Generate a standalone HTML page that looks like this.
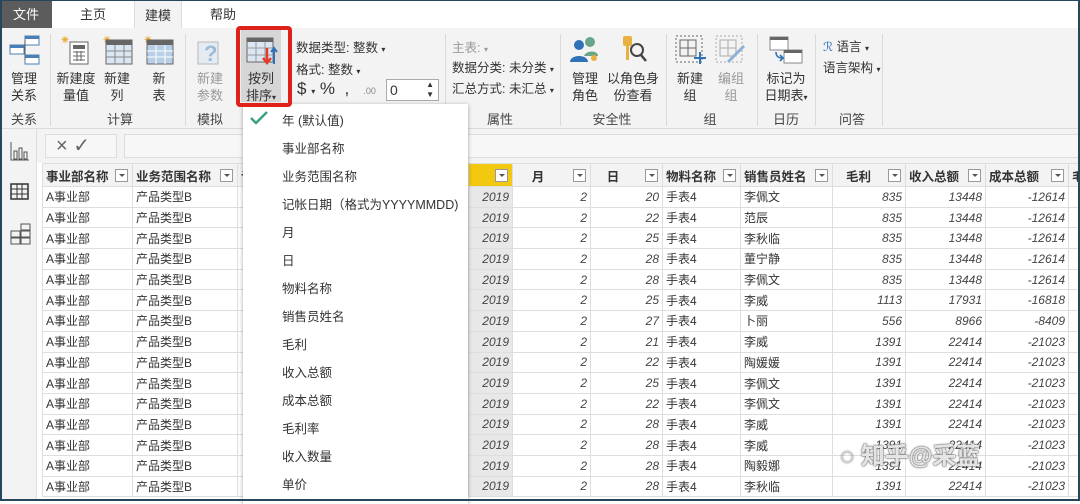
<!DOCTYPE html>
<html><head><meta charset="utf-8"><style>
*{margin:0;padding:0;box-sizing:border-box}
body{width:1080px;height:501px;overflow:hidden;background:#fff;font-family:"Liberation Sans","Noto Sans CJK SC",sans-serif;color:#333;position:relative;font-size:12px}
.a{position:absolute}
#frame{position:absolute;inset:0;border:2px solid #27475a;border-top-width:1px;pointer-events:none;z-index:50}
.tab{position:absolute;top:0;height:28px;line-height:30px;font-size:13px;text-align:center}
#ribbon{position:absolute;top:28px;left:0;width:1080px;height:101px;background:#f3f3f3;border-bottom:1px solid #dcdcdc}
.btn{position:absolute;text-align:center;font-size:13px;line-height:17px;color:#333}
.gl{position:absolute;top:109px;font-size:13px;color:#444;text-align:center}
.sep{position:absolute;top:34px;width:1px;height:92px;background:#dadada}
.sm{position:absolute;font-size:12.5px;color:#333}
.dis{color:#999}
table{position:absolute;left:42px;top:163px;border-collapse:collapse;table-layout:fixed;width:1040px}
td,th{border:1px solid #dedede;height:20.7px;padding:0 3px;white-space:nowrap;overflow:hidden;font-size:12px}
th{height:23px;background:#f3f3f3;font-weight:bold;text-align:left;color:#333;position:relative;font-size:12.5px}
th i{position:absolute;right:4px;top:5px;width:13px;height:13px;border:1px solid #999;background:#fff}
th i:after{content:"";position:absolute;left:3px;top:4px;border:3px solid transparent;border-top:3px solid #555}
td.n{text-align:right;font-style:italic;color:#444}
td.y{background:#e8e8e8;text-align:right;font-style:italic;color:#444}
#dd{position:absolute;left:243px;top:104px;width:225px;height:400px;background:#fff;box-shadow:0 1px 4px rgba(0,0,0,.35);z-index:10}
#dd div{position:absolute;left:39px;font-size:12.5px;color:#333}
</style></head><body>
<div class="tab" style="left:0;width:52px;background:#5c5c5c;color:#fff;font-size:13px">文件</div>
<div class="tab" style="left:68px;width:50px;font-size:13px">主页</div>
<div class="tab" style="left:134px;width:48px;background:#f3f3f3;border:1px solid #dcdcdc;border-bottom:none;height:29px;font-size:13px">建模</div>
<div class="tab" style="left:198px;width:50px;font-size:13px">帮助</div>
<div id="ribbon"></div>
<svg class="a" style="left:9px;top:34px" width="32" height="32"><rect x="16" y="2" width="14" height="9" fill="#fff" stroke="#4a7fb5"/><rect x="1" y="11" width="14" height="9" fill="#fff" stroke="#4a7fb5"/><rect x="16" y="21" width="14" height="9" fill="#fff" stroke="#4a7fb5"/><path d="M15 15H16M16 6V26" stroke="#555" fill="none"/><rect x="16" y="2" width="14" height="3" fill="#4a7fb5"/><rect x="16" y="21" width="14" height="3" fill="#4a7fb5"/><rect x="1" y="11" width="14" height="3" fill="#4a7fb5"/></svg>
<div class="btn" style="left:6px;top:70px;width:36px">管理<br>关系</div>
<div class="sep" style="left:50px"></div>
<svg class="a" style="left:60px;top:34px" width="32" height="32"><text x="0" y="10" font-size="12" fill="#e8b040">✷</text><rect x="10" y="8" width="18" height="22" fill="#fff" stroke="#666"/><rect x="13" y="11" width="12" height="4" fill="#666"/><path d="M13 18h12M13 22h12M13 26h12M17 17v10M21 17v10" stroke="#666"/></svg>
<div class="btn" style="left:54px;top:70px;width:44px">新建度<br>量值</div>
<svg class="a" style="left:102px;top:34px" width="32" height="32"><text x="0" y="10" font-size="12" fill="#e8b040">✷</text><rect x="4" y="6" width="26" height="24" fill="#dbe6f3" stroke="#666"/><rect x="4" y="6" width="26" height="5" fill="#666"/><path d="M4 17h26M4 23h26M13 11v19M22 11v19" stroke="#888"/></svg>
<div class="btn" style="left:100px;top:70px;width:34px">新建<br>列</div>
<svg class="a" style="left:143px;top:34px" width="32" height="32"><text x="0" y="10" font-size="12" fill="#e8b040">✷</text><rect x="4" y="6" width="26" height="24" fill="#b9cfe8" stroke="#666"/><rect x="4" y="6" width="26" height="5" fill="#666"/><path d="M4 17h26M4 23h26M13 11v19M22 11v19" stroke="#fff"/></svg>
<div class="btn" style="left:145px;top:70px;width:28px">新<br>表</div>
<div class="gl" style="left:80px;width:80px">计算</div>
<div class="gl" style="left:6px;width:36px">关系</div>
<div class="sep" style="left:185px"></div>
<svg class="a" style="left:192px;top:34px" width="34" height="32" opacity=".55"><rect x="6" y="8" width="20" height="22" fill="#dbe6f3" stroke="#888"/><text x="12" y="27" font-size="22" font-weight="bold" fill="#5a8fc5">?</text></svg>
<div class="btn dis" style="left:193px;top:70px;width:34px">新建<br>参数</div>
<div class="gl" style="left:193px;width:34px">模拟</div>
<div class="a" style="left:241px;top:30px;width:40px;height:72px;background:#d6d6d6"></div>
<svg class="a" style="left:245px;top:36px" width="34" height="32"><rect x="2" y="2" width="26" height="24" fill="#dbe6f3" stroke="#666"/><rect x="2" y="2" width="26" height="4" fill="#666"/><path d="M2 12h26M2 19h26M11 6v20M20 6v20" stroke="#999"/><path d="M22 12v14M18 22l4 5 4-5" stroke="#e53a2a" stroke-width="2.5" fill="none"/><path d="M29 28V12M26 16l3-4 3 4" stroke="#2f72b8" stroke-width="2" fill="none"/></svg>
<div class="btn" style="left:241px;top:70px;width:40px">按列<br>排序<span style="font-size:8px">▾</span></div>
<div class="a" style="left:236px;top:26px;width:56px;height:81px;border:4px solid #e0211a;border-radius:4px;z-index:20"></div>
<div class="sm" style="left:296px;top:37px">数据类型: 整数 <span style="font-size:8px">▾</span></div>
<div class="sm" style="left:296px;top:59px">格式: 整数 <span style="font-size:8px">▾</span></div>
<div class="sm" style="left:297px;top:79px;font-size:17px">$ <span style="font-size:8px">▾</span> %&nbsp; ,&nbsp;&nbsp; <span style="font-size:9px;color:#888">.00</span></div>
<div class="a" style="left:386px;top:79px;width:53px;height:22px;border:1px solid #aaa;background:#fff;font-size:14px;padding-left:3px;line-height:20px">0<span style="position:absolute;right:4px;top:0;font-size:8px;line-height:10px">▲<br>▼</span></div>
<div class="sep" style="left:445px"></div>
<div class="sm dis" style="left:452px;top:37px">主表: <span style="font-size:8px">▾</span></div>
<div class="sm" style="left:452px;top:57px">数据分类: 未分类 <span style="font-size:8px">▾</span></div>
<div class="sm" style="left:452px;top:78px">汇总方式: 未汇总 <span style="font-size:8px">▾</span></div>
<div class="gl" style="left:470px;width:60px">属性</div>
<div class="sep" style="left:560px"></div>
<svg class="a" style="left:568px;top:34px" width="34" height="32"><circle cx="22" cy="8" r="5" fill="#6aa587"/><circle cx="11" cy="11" r="5" fill="#2f72b8"/><path d="M2 28c0-8 18-8 18 0z" fill="#2f72b8"/><path d="M16 22c2-6 14-6 14 0z" fill="#6aa587"/><circle cx="26" cy="24" r="3" fill="#e8b040"/></svg>
<div class="btn" style="left:568px;top:70px;width:34px">管理<br>角色</div>
<svg class="a" style="left:617px;top:34px" width="34" height="32"><rect x="6" y="2" width="9" height="10" rx="2" fill="#e8b040"/><rect x="9" y="12" width="3" height="14" fill="#e8b040"/><circle cx="20" cy="16" r="6" fill="none" stroke="#444" stroke-width="2"/><path d="M24 21l5 6" stroke="#444" stroke-width="2.5"/></svg>
<div class="btn" style="left:604px;top:70px;width:58px">以角色身<br>份查看</div>
<div class="gl" style="left:585px;width:54px">安全性</div>
<div class="sep" style="left:666px"></div>
<svg class="a" style="left:674px;top:34px" width="34" height="32"><rect x="2" y="2" width="26" height="26" fill="none" stroke="#666" stroke-dasharray="2 2"/><path d="M6 6h16v16H6zM14 6v16M6 14h16" stroke="#666" fill="none"/><path d="M26 18v12M20 24h12" stroke="#2f72b8" stroke-width="2"/></svg>
<div class="btn" style="left:673px;top:70px;width:34px">新建<br>组</div>
<svg class="a" style="left:714px;top:34px" width="34" height="32" opacity=".5"><rect x="2" y="2" width="26" height="26" fill="none" stroke="#666" stroke-dasharray="2 2"/><path d="M6 6h16v16H6zM14 6v16M6 14h16" stroke="#666" fill="none"/><path d="M14 28l16-16" stroke="#2f72b8" stroke-width="3"/></svg>
<div class="btn dis" style="left:714px;top:70px;width:34px">编组<br>组</div>
<div class="gl" style="left:690px;width:40px">组</div>
<div class="sep" style="left:757px"></div>
<svg class="a" style="left:768px;top:34px" width="36" height="32"><rect x="2" y="3" width="18" height="13" fill="#fff" stroke="#888"/><rect x="2" y="3" width="18" height="3" fill="#666"/><rect x="16" y="16" width="18" height="13" fill="#fff" stroke="#888"/><rect x="16" y="16" width="18" height="3" fill="#666"/><path d="M8 18c0 5 3 6 7 6M12 21l3 3-3 3" stroke="#2f72b8" stroke-width="1.6" fill="none"/></svg>
<div class="btn" style="left:760px;top:70px;width:52px">标记为<br>日期表<span style="font-size:8px">▾</span></div>
<div class="gl" style="left:766px;width:40px">日历</div>
<div class="sep" style="left:815px"></div>
<div class="sm" style="left:823px;top:36px"><span style="color:#2f72b8">ℛ</span> 语言 <span style="font-size:8px">▾</span></div>
<div class="sm" style="left:823px;top:57px">语言架构 <span style="font-size:8px">▾</span></div>
<div class="gl" style="left:832px;width:40px">问答</div>
<div class="sep" style="left:882px"></div>
<div class="a" style="left:0;top:129px;width:37px;height:372px;background:#f3f3f3;border-right:1px solid #ddd"></div>
<svg class="a" style="left:9px;top:140px" width="22" height="22"><path d="M2 2v18h18" stroke="#555" fill="none"/><rect x="5" y="11" width="3" height="8" fill="none" stroke="#555"/><rect x="10" y="8" width="3" height="11" fill="none" stroke="#555"/><rect x="15" y="12" width="3" height="7" fill="none" stroke="#555"/></svg>
<svg class="a" style="left:10px;top:183px" width="20" height="18"><rect x="1" y="1" width="17" height="15" fill="none" stroke="#333" stroke-width="1.5"/><path d="M1 6h17M1 11h17M7 1v15M12 1v15" stroke="#333"/></svg>
<svg class="a" style="left:10px;top:223px" width="22" height="22"><rect x="11" y="1" width="9" height="6" fill="none" stroke="#555"/><rect x="1" y="8" width="9" height="6" fill="none" stroke="#555"/><rect x="11" y="8" width="9" height="6" fill="none" stroke="#555"/><rect x="11" y="15" width="9" height="6" fill="none" stroke="#555"/><rect x="1" y="15" width="9" height="6" fill="none" stroke="#555"/></svg>
<div class="a" style="left:37px;top:129px;width:1043px;height:34px;background:#f3f3f3"></div>
<div class="a" style="left:45px;top:134px;width:72px;height:24px;border:1px solid #ddd;background:#f7f7f7;font-size:20px;color:#666;line-height:22px;padding-left:10px;font-family:'Liberation Sans',sans-serif">×&nbsp;✓</div>
<div class="a" style="left:124px;top:134px;width:956px;height:24px;border:1px solid #ddd;background:#f7f7f7"></div>
<table>
<colgroup><col style="width:90px"><col style="width:105px"><col style="width:231px"><col style="width:44px"><col style="width:78px"><col style="width:72px"><col style="width:78px"><col style="width:92px"><col style="width:73px"><col style="width:80px"><col style="width:83px"><col style="width:14px"></colgroup>
<tr><th>事业部名称<i></i></th><th>业务范围名称<i></i></th><th>记帐日期<i></i></th><th style="background:#f2c811"><i></i></th><th style="text-align:center;padding-right:30px">月<i></i></th><th style="text-align:center;padding-right:30px">日<i></i></th><th>物料名称<i></i></th><th>销售员姓名<i></i></th><th style="text-align:center;padding-right:24px">毛利<i></i></th><th>收入总额<i></i></th><th>成本总额<i></i></th><th>毛</th></tr>
<tr><td>A事业部</td><td>产品类型B</td><td></td><td class="y">2019</td><td class="n">2</td><td class="n">20</td><td>手表4</td><td>李佩文</td><td class="n">835</td><td class="n">13448</td><td class="n">-12614</td><td></td></tr>
<tr><td>A事业部</td><td>产品类型B</td><td></td><td class="y">2019</td><td class="n">2</td><td class="n">22</td><td>手表4</td><td>范辰</td><td class="n">835</td><td class="n">13448</td><td class="n">-12614</td><td></td></tr>
<tr><td>A事业部</td><td>产品类型B</td><td></td><td class="y">2019</td><td class="n">2</td><td class="n">25</td><td>手表4</td><td>李秋临</td><td class="n">835</td><td class="n">13448</td><td class="n">-12614</td><td></td></tr>
<tr><td>A事业部</td><td>产品类型B</td><td></td><td class="y">2019</td><td class="n">2</td><td class="n">28</td><td>手表4</td><td>董宁静</td><td class="n">835</td><td class="n">13448</td><td class="n">-12614</td><td></td></tr>
<tr><td>A事业部</td><td>产品类型B</td><td></td><td class="y">2019</td><td class="n">2</td><td class="n">28</td><td>手表4</td><td>李佩文</td><td class="n">835</td><td class="n">13448</td><td class="n">-12614</td><td></td></tr>
<tr><td>A事业部</td><td>产品类型B</td><td></td><td class="y">2019</td><td class="n">2</td><td class="n">25</td><td>手表4</td><td>李威</td><td class="n">1113</td><td class="n">17931</td><td class="n">-16818</td><td></td></tr>
<tr><td>A事业部</td><td>产品类型B</td><td></td><td class="y">2019</td><td class="n">2</td><td class="n">27</td><td>手表4</td><td>卜丽</td><td class="n">556</td><td class="n">8966</td><td class="n">-8409</td><td></td></tr>
<tr><td>A事业部</td><td>产品类型B</td><td></td><td class="y">2019</td><td class="n">2</td><td class="n">21</td><td>手表4</td><td>李威</td><td class="n">1391</td><td class="n">22414</td><td class="n">-21023</td><td></td></tr>
<tr><td>A事业部</td><td>产品类型B</td><td></td><td class="y">2019</td><td class="n">2</td><td class="n">22</td><td>手表4</td><td>陶媛媛</td><td class="n">1391</td><td class="n">22414</td><td class="n">-21023</td><td></td></tr>
<tr><td>A事业部</td><td>产品类型B</td><td></td><td class="y">2019</td><td class="n">2</td><td class="n">25</td><td>手表4</td><td>李佩文</td><td class="n">1391</td><td class="n">22414</td><td class="n">-21023</td><td></td></tr>
<tr><td>A事业部</td><td>产品类型B</td><td></td><td class="y">2019</td><td class="n">2</td><td class="n">22</td><td>手表4</td><td>李佩文</td><td class="n">1391</td><td class="n">22414</td><td class="n">-21023</td><td></td></tr>
<tr><td>A事业部</td><td>产品类型B</td><td></td><td class="y">2019</td><td class="n">2</td><td class="n">28</td><td>手表4</td><td>李威</td><td class="n">1391</td><td class="n">22414</td><td class="n">-21023</td><td></td></tr>
<tr><td>A事业部</td><td>产品类型B</td><td></td><td class="y">2019</td><td class="n">2</td><td class="n">28</td><td>手表4</td><td>李威</td><td class="n">1391</td><td class="n">22414</td><td class="n">-21023</td><td></td></tr>
<tr><td>A事业部</td><td>产品类型B</td><td></td><td class="y">2019</td><td class="n">2</td><td class="n">28</td><td>手表4</td><td>陶毅娜</td><td class="n">1391</td><td class="n">22414</td><td class="n">-21023</td><td></td></tr>
<tr><td>A事业部</td><td>产品类型B</td><td></td><td class="y">2019</td><td class="n">2</td><td class="n">28</td><td>手表4</td><td>李秋临</td><td class="n">1391</td><td class="n">22414</td><td class="n">-21023</td><td></td></tr>
</table>
<div id="dd">
<svg class="a" style="left:7px;top:7px" width="18" height="14"><path d="M1 7l5 5L17 1" stroke="#3aa37a" stroke-width="2.5" fill="none"/></svg>
<div style="top:6px">年 (默认值)</div>
<div style="top:34px">事业部名称</div>
<div style="top:62px">业务范围名称</div>
<div style="top:90px">记帐日期（格式为YYYYMMDD)</div>
<div style="top:118px">月</div>
<div style="top:146px">日</div>
<div style="top:174px">物料名称</div>
<div style="top:202px">销售员姓名</div>
<div style="top:230px">毛利</div>
<div style="top:258px">收入总额</div>
<div style="top:286px">成本总额</div>
<div style="top:314px">毛利率</div>
<div style="top:342px">收入数量</div>
<div style="top:370px">单价</div>
</div>
<div class="a" style="left:840px;top:436px;font-size:24px;color:rgba(255,255,255,.85);text-shadow:0 0 2px #555,0 0 1px #333;z-index:30;font-weight:bold">◌ 知乎@采蓝</div>
<div id="frame"></div>
</body></html>
